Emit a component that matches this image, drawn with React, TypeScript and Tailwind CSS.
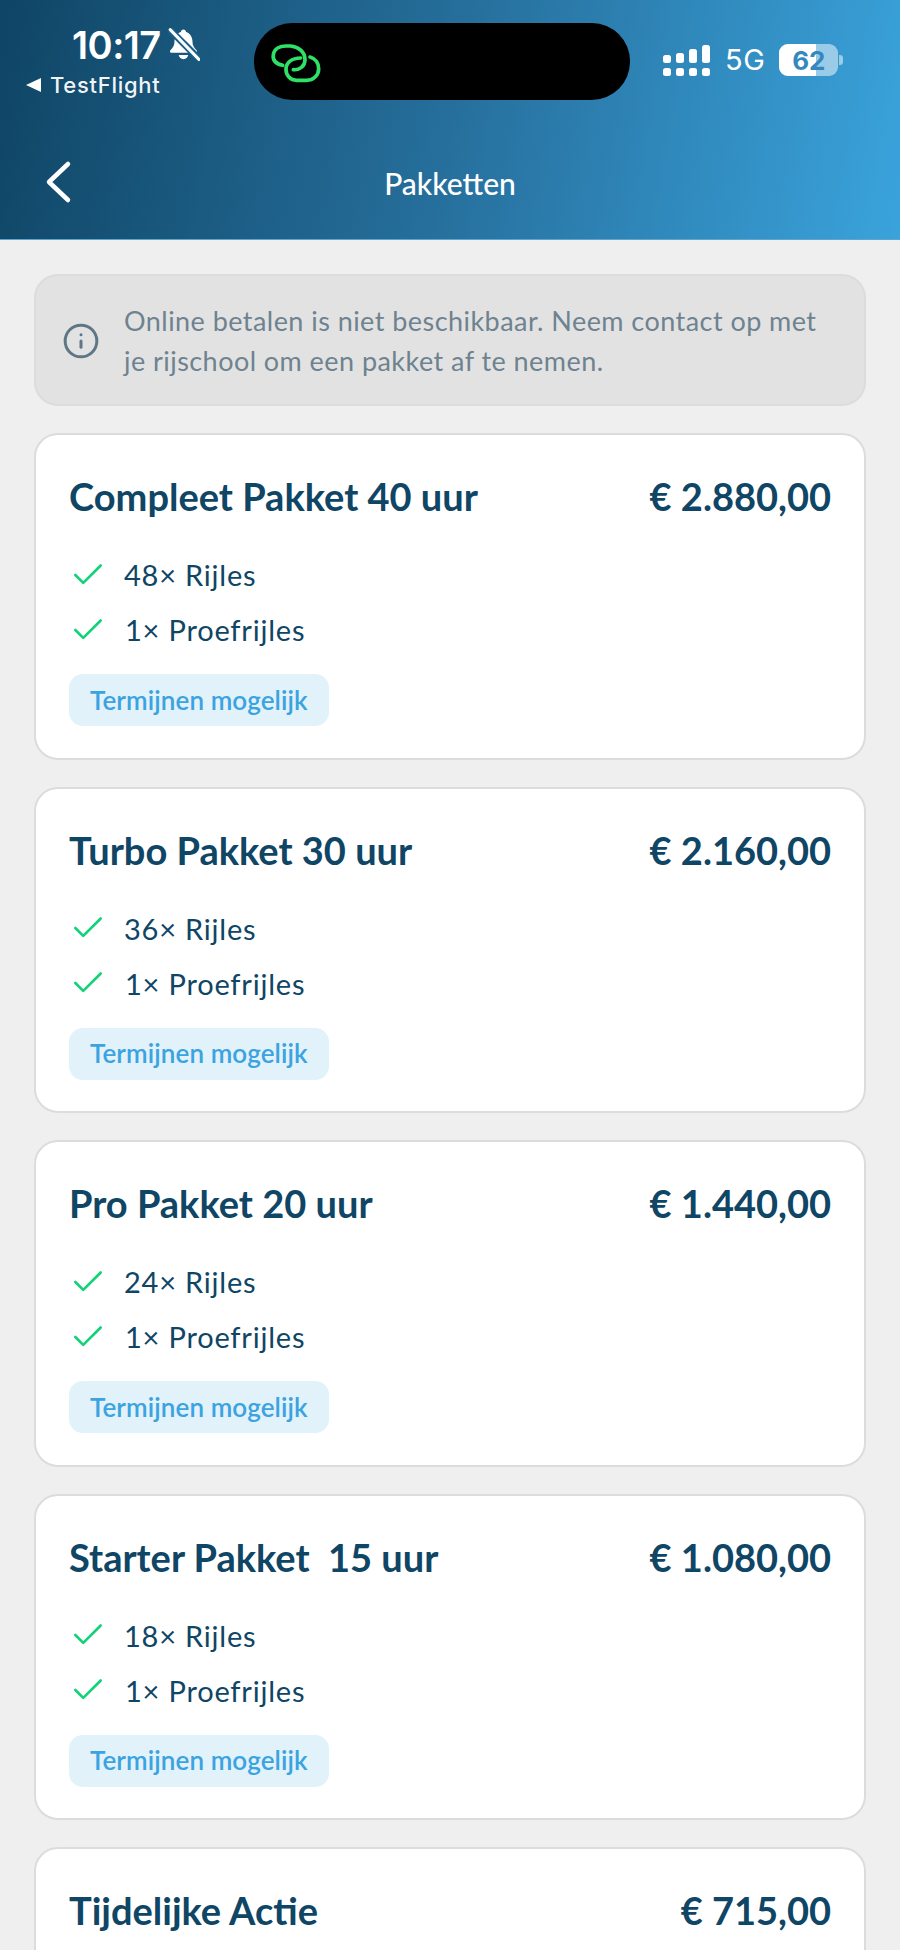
import { Check, Info } from 'lucide-react'

const packages = [
  { name: 'Compleet Pakket 40 uur', price: '€ 2.880,00', lessons: '48× Rijles' },
  { name: 'Turbo Pakket 30 uur', price: '€ 2.160,00', lessons: '36× Rijles' },
  { name: 'Pro Pakket 20 uur', price: '€ 1.440,00', lessons: '24× Rijles' },
  { name: 'Starter Pakket\u00a0 15 uur', price: '€ 1.080,00', lessons: '18× Rijles' },
]

function BellOff() {
  return (
    <svg width="32" height="34" viewBox="0 0 30 32" fill="none">
      <path d="M14.500 1.500c-1.400 0-2.300 1-2.400 2.300C8 5 6 9 6 13c0 3.400-1.200 5.400-3.800 8-.9.9-.5 2.400 1 2.400h22.600c1.500 0 1.900-1.500 1-2.400-2.600-2.600-3.800-4.600-3.800-8 0-4-2-8-6.100-9.200C16.800 2.500 15.900 1.500 14.500 1.500z" fill="white" />
      <path d="M10 25.500h9c-.3 2.200-2.200 3.800-4.500 3.800S10.300 27.700 10 25.500z" fill="white" />
      <path d="M1 1l28 28" stroke="#1a5f88" strokeWidth="6.500" />
      <path d="M2 1.500l27 28" stroke="white" strokeWidth="2.800" strokeLinecap="round" />
    </svg>
  )
}

function LinkLogo() {
  return (
    <svg width="70" height="60" viewBox="0 0 210 180" fill="none" stroke="#2fe266" strokeWidth="11" strokeLinecap="round">
      <path d="M68 100C45 95 38 82 40 68 43 50 60 42 78 42L92 42C115 44 135 60 135 83 135 103 118 115 100 113" />
      <path d="M150 75C168 80 176 95 176 110 176 130 160 145 140 145L110 145C90 145 78 130 78 112 78 92 95 78 122 78" />
    </svg>
  )
}

function Signal() {
  const cols = ['h-[8px]', 'h-[10px]', 'h-[14px]', 'h-[18px]']
  return (
    <div className="flex items-end gap-[5px]">
      {cols.map((h) => (
        <div key={h} className="flex w-[8px] flex-col gap-[5px]">
          <div className={`${h} rounded-[2.500px] bg-white`} />
          <div className="h-[8px] rounded-[2.500px] bg-white" />
        </div>
      ))}
    </div>
  )
}

function Battery() {
  return (
    <div className="flex items-center gap-[1px]">
      <div className="relative h-[32px] w-[59px] overflow-hidden rounded-[9px] bg-white/50">
        <div className="absolute inset-y-0 left-0 w-[37px] bg-white" />
        <div className="absolute inset-0 flex items-center justify-center font-['Inter',sans-serif] text-[26px] font-bold text-[#3488c0]">
          62
        </div>
      </div>
      <div className="h-[10px] w-[4px] rounded-r-[3px] bg-white/50" />
    </div>
  )
}

function Header() {
  return (
    <header className="h-[240px] border-b border-[#5ea5cf] bg-linear-[100deg] from-[#0f4565] via-[#266f9c] to-[#3aa3dc]">
      <div className="flex h-[100px] items-start">
        <div className="flex w-[254px] flex-col items-start pl-[26px] pt-[23px]">
          <div className="flex items-center gap-[7px] pl-[46px]">
            <span className="font-['Inter',sans-serif] text-[38px] leading-[44px] font-semibold tracking-[-0.5px] text-white">10:17</span>
            <BellOff />
          </div>
          <div className="flex items-center gap-[9px] pt-[5px]">
            <span className="h-0 w-0 border-y-[7px] border-r-[15px] border-y-transparent border-r-white" />
            <span className="font-['Inter',sans-serif] text-[22px] leading-[26px] font-medium tracking-[0.7px] text-white/95">TestFlight</span>
          </div>
        </div>
        <div className="mt-[23px] flex h-[77px] w-[376px] items-center rounded-[38px] bg-black pl-[6px]">
          <LinkLogo />
        </div>
        <div className="flex items-center pl-[33px] pt-[44px]">
          <Signal />
          <span className="pl-[15px] font-['Inter',sans-serif] text-[29px] leading-[32px] font-normal tracking-[0.5px] text-white">5G</span>
          <div className="pl-[14px]">
            <Battery />
          </div>
        </div>
      </div>
      <div className="relative mt-[41px] flex h-[84px] items-center justify-center">
        <svg className="absolute left-[44px] top-[19px]" width="30" height="46" viewBox="0 0 30 46" fill="none" stroke="white" strokeWidth="4.500" strokeLinecap="round" strokeLinejoin="round">
          <path d="M24 4 5 22l19 18" />
        </svg>
        <h1 className="font-['Lato',sans-serif] text-[30px] font-medium text-white">Pakketten</h1>
      </div>
    </header>
  )
}

function PackageCard({ name, price, lessons }: { name: string; price: string; lessons?: string }) {
  return (
    <article className="h-[326.500px] shrink-0 rounded-[24px] border-2 border-[#dcdcdc] bg-white px-[33px] pt-[37px]">
      <div className="flex items-center justify-between font-['Lato',sans-serif] text-[38px] leading-[48px] font-bold text-[#0f4565]">
        <span>{name}</span>
        <span>{price}</span>
      </div>
      {lessons && (
        <>
          <ul className="mt-[32px] flex flex-col gap-[10px] font-['Lato',sans-serif] text-[29px] leading-[45px] tracking-[0.8px] text-[#0f4565]">
            <li className="flex items-center gap-[17px]">
              <Check className="text-[#12d278]" size={38} strokeWidth={2.6} absoluteStrokeWidth />
              {lessons}
            </li>
            <li className="flex items-center gap-[17px]">
              <Check className="text-[#12d278]" size={38} strokeWidth={2.6} absoluteStrokeWidth />
              <span className="pl-[1px]">1× Proefrijles</span>
            </li>
          </ul>
          <div className="mt-[22px] inline-flex h-[52px] items-center rounded-[14px] bg-[#e1f2fb] px-[21px] font-['Lato',sans-serif] text-[26px] font-semibold tracking-[0.1px] text-[#3ba3e0]">
            Termijnen mogelijk
          </div>
        </>
      )}
    </article>
  )
}

export default function App() {
  return (
    <div className="h-[1950px] w-[900px] overflow-hidden bg-[#efefef]">
      <Header />
      <main className="flex flex-col gap-[27px] px-[34px] pt-[34px]">
        <div className="flex h-[132px] items-center gap-[24px] rounded-[24px] border-2 border-[#dcdcdc] bg-[#e2e2e2] pl-[26px] pr-[44px] pt-[2px] font-['Lato',sans-serif] text-[27px] leading-[40px] tracking-[0.45px] text-[#6e8290]">
          <Info className="shrink-0 text-[#5f7686]" size={38} strokeWidth={3} absoluteStrokeWidth />
          <p>Online betalen is niet beschikbaar. Neem contact op met je rijschool om een pakket af te nemen.</p>
        </div>
        {packages.map((p) => (
          <PackageCard key={p.name} {...p} />
        ))}
        <PackageCard name="Tijdelijke Actie" price="€ 715,00" />
      </main>
    </div>
  )
}
